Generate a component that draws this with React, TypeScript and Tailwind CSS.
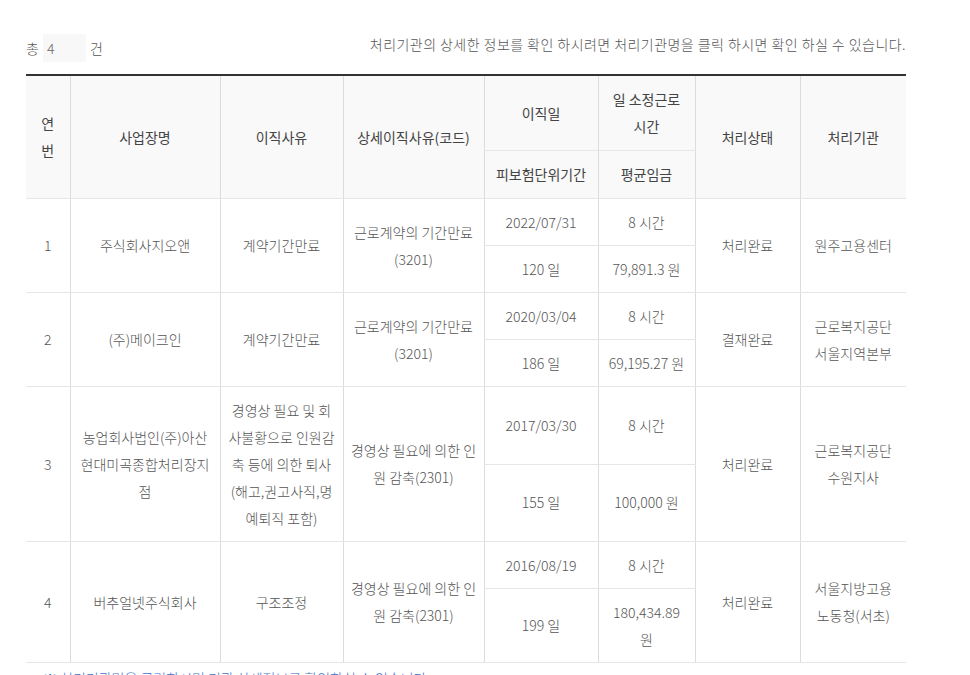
const rows = [
  {
    no: '1',
    name: ['주식회사지오앤'],
    reason: ['계약기간만료'],
    detail: ['근로계약의 기간만료', '(3201)'],
    date: '2022/07/31',
    hours: '8 시간',
    days: '120 일',
    wage: ['79,891.3 원'],
    status: '처리완료',
    agency: ['원주고용센터'],
  },
  {
    no: '2',
    name: ['(주)메이크인'],
    reason: ['계약기간만료'],
    detail: ['근로계약의 기간만료', '(3201)'],
    date: '2020/03/04',
    hours: '8 시간',
    days: '186 일',
    wage: ['69,195.27 원'],
    status: '결재완료',
    agency: ['근로복지공단', '서울지역본부'],
  },
  {
    no: '3',
    name: ['농업회사법인(주)아산', '현대미곡종합처리장지', '점'],
    reason: ['경영상 필요 및 회', '사불황으로 인원감', '축 등에 의한 퇴사', '(해고,권고사직,명', '예퇴직 포함)'],
    detail: ['경영상 필요에 의한 인', '원 감축(2301)'],
    date: '2017/03/30',
    hours: '8 시간',
    days: '155 일',
    wage: ['100,000 원'],
    status: '처리완료',
    agency: ['근로복지공단', '수원지사'],
  },
  {
    no: '4',
    name: ['버추얼넷주식회사'],
    reason: ['구조조정'],
    detail: ['경영상 필요에 의한 인', '원 감축(2301)'],
    date: '2016/08/19',
    hours: '8 시간',
    days: '199 일',
    wage: ['180,434.89', '원'],
    status: '처리완료',
    agency: ['서울지방고용', '노동청(서초)'],
  },
]

function Lines({ lines }: { lines: string[] }) {
  return (
    <>
      {lines.map((l, i) => (
        <div key={i} className="whitespace-nowrap">
          {l}
        </div>
      ))}
    </>
  )
}

const th = 'border-l border-[#dcdcdc] border-b border-b-[#e6e6e6] px-1 py-[10px] text-center align-middle font-normal text-[#444]'
const td = 'border-l border-[#dcdcdc] border-b border-b-[#e6e6e6] px-1 py-[9.5px] text-center align-middle leading-[27px] text-[#555]'

export default function App() {
  return (
    <div
      className="min-h-screen bg-white pl-[26px] pt-[34px] text-[14px] leading-[27px] text-[#555]"
      style={{ fontFamily: '"Noto Sans CJK KR", "Noto Sans", sans-serif' }}
    >
      <div className="flex w-[880px] items-center justify-between">
        <div className="flex items-center font-light">
          <span>총</span>
          <span className="mx-[4px] flex h-[28px] w-[43px] items-center bg-[#f8f8f8] pl-[4px] text-[#666]">4</span>
          <span>건</span>
        </div>
        <p className="-translate-y-[4px] font-light tracking-[0.45px] text-[#555]">
          처리기관의 상세한 정보를 확인 하시려면 처리기관명을 클릭 하시면 확인 하실 수 있습니다.
        </p>
      </div>

      <table className="mt-[12px] w-[880px] table-fixed border-collapse border-t-2 border-t-[#333] font-light">
        <colgroup>
          <col className="w-[44px]" />
          <col className="w-[150px]" />
          <col className="w-[123px]" />
          <col className="w-[141px]" />
          <col className="w-[114px]" />
          <col className="w-[97px]" />
          <col className="w-[105px]" />
          <col className="w-[106px]" />
        </colgroup>
        <thead className="bg-[#f9f9f9]">
          <tr className="h-[73px]">
            <th rowSpan={2} className={th + ' !border-l-0'}>
              <Lines lines={['연', '번']} />
            </th>
            <th rowSpan={2} className={th}>사업장명</th>
            <th rowSpan={2} className={th}>이직사유</th>
            <th rowSpan={2} className={th}>상세이직사유(코드)</th>
            <th className={th}>이직일</th>
            <th className={th}>
              <Lines lines={['일 소정근로', '시간']} />
            </th>
            <th rowSpan={2} className={th}>처리상태</th>
            <th rowSpan={2} className={th}>처리기관</th>
          </tr>
          <tr className="h-[47px]">
            <th className={th}>피보험단위기간</th>
            <th className={th}>평균임금</th>
          </tr>
        </thead>
        <tbody>
          {rows.map((r) => [
            <tr key={r.no + 'a'}>
              <td rowSpan={2} className={td + ' !border-l-0'}>{r.no}</td>
              <td rowSpan={2} className={td}>
                <Lines lines={r.name} />
              </td>
              <td rowSpan={2} className={td}>
                <Lines lines={r.reason} />
              </td>
              <td rowSpan={2} className={td}>
                <Lines lines={r.detail} />
              </td>
              <td className={td}>{r.date}</td>
              <td className={td}>{r.hours}</td>
              <td rowSpan={2} className={td}>{r.status}</td>
              <td rowSpan={2} className={td}>
                <Lines lines={r.agency} />
              </td>
            </tr>,
            <tr key={r.no + 'b'}>
              <td className={td}>{r.days}</td>
              <td className={td}>
                <Lines lines={r.wage} />
              </td>
            </tr>,
          ])}
        </tbody>
      </table>

      <p className="mt-[2px] pl-[17px] font-light text-[#3a6fd0]">
        ※ 처리기관명을 클릭하시면 기관 상세정보를 확인하실 수 있습니다.
      </p>
    </div>
  )
}
